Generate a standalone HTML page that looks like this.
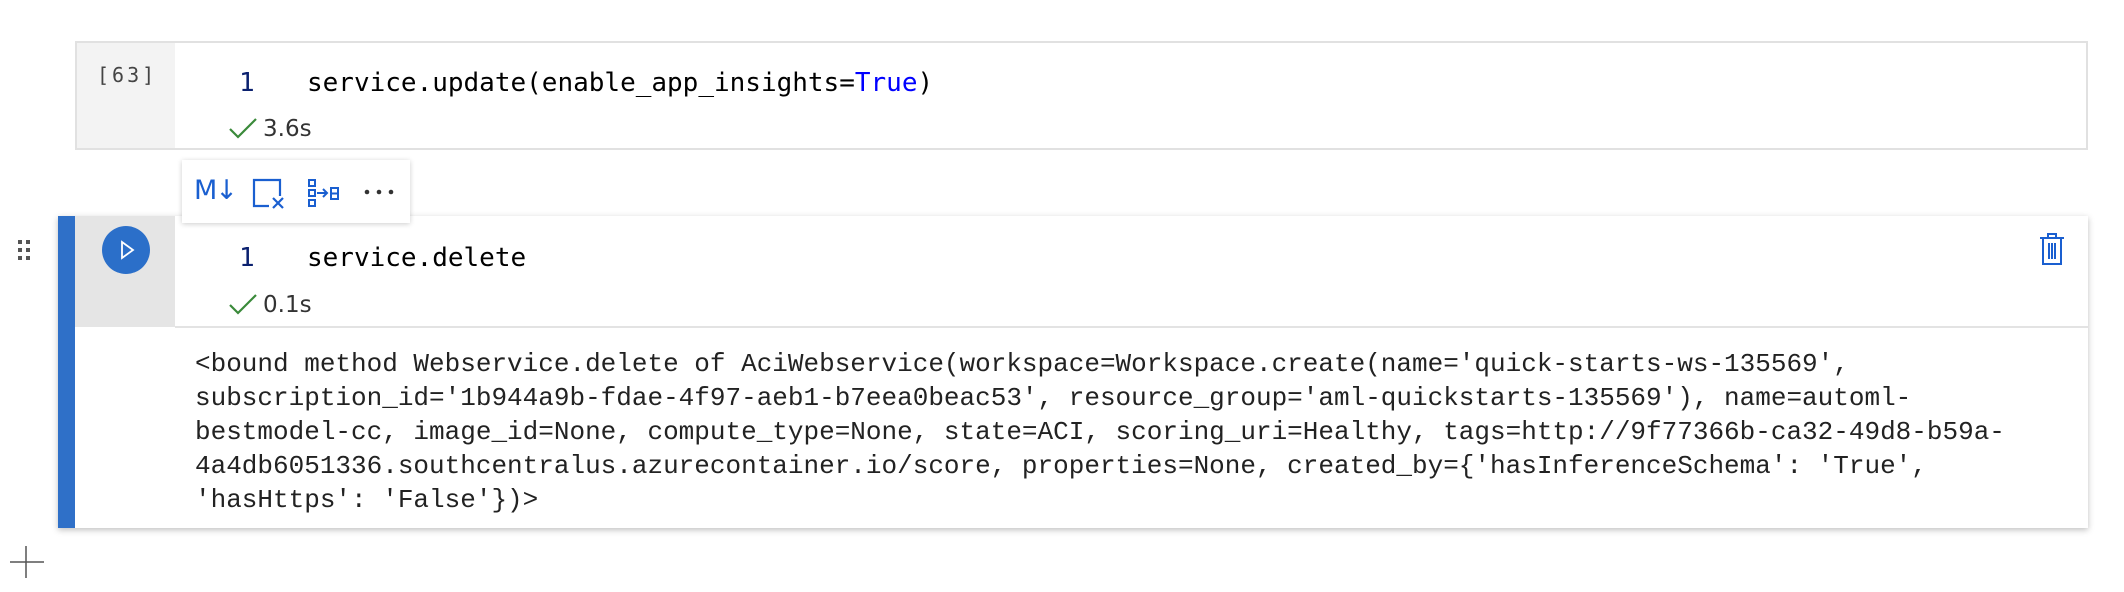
<!DOCTYPE html>
<html><head><meta charset="utf-8"><style>
html,body{margin:0;padding:0;background:#fff;width:2124px;height:592px;overflow:hidden;position:relative;font-family:"Liberation Sans",sans-serif}
.abs{position:absolute}
.mono{font-family:"DejaVu Sans Mono","Liberation Mono",monospace;font-size:26px;color:#000;white-space:pre}
.ln{color:#0b216f}
.chk{font-family:"DejaVu Sans",sans-serif;font-size:23px;color:#333}
.out{font-family:"Liberation Mono",monospace;font-size:26px;line-height:34px;color:#222;white-space:pre}
</style></head><body>
<!-- cell 1 -->
<div class="abs" style="left:75px;top:41px;width:2009px;height:105px;border:2px solid #e1e1e1;background:#fff"></div>
<div class="abs" style="left:77px;top:43px;width:98px;height:105px;background:#f3f3f3"></div>
<div class="abs" style="left:97px;top:63px;font-family:'DejaVu Sans Mono',monospace;font-size:20px;letter-spacing:3px;color:#444">[63]</div>
<div class="abs mono ln" style="left:239px;top:68px">1</div>
<div class="abs mono" style="left:307px;top:68px">service.update(enable_app_insights=<span style="color:#0000ff">True</span>)</div>
<svg class="abs" style="left:228px;top:116px" width="30" height="26"><path d="M2 13 L10 21 L28 3" fill="none" stroke="#3a8a3a" stroke-width="2.2"/></svg>
<div class="abs chk" style="left:263px;top:116px">3.6s</div>

<!-- cell 2 -->
<div class="abs" style="left:58px;top:216px;width:2030px;height:312px;background:#fff;box-shadow:0 2px 6px rgba(0,0,0,0.25)"></div>
<div class="abs" style="left:58px;top:216px;width:17px;height:312px;background:#2f70c8"></div>
<div class="abs" style="left:75px;top:216px;width:100px;height:111px;background:#e5e5e5"></div>
<div class="abs" style="left:175px;top:326px;width:1913px;height:2px;background:#e3e3e3"></div>
<div class="abs" style="left:102px;top:226px;width:48px;height:48px;border-radius:50%;background:#2b6fc9"></div>
<svg class="abs" style="left:102px;top:226px" width="48" height="48"><path d="M20 16 L31 24 L20 32 Z" fill="none" stroke="#fff" stroke-width="1.8"/></svg>
<div class="abs mono ln" style="left:239px;top:243px">1</div>
<div class="abs mono" style="left:307px;top:243px">service.delete</div>
<svg class="abs" style="left:228px;top:292px" width="30" height="26"><path d="M2 13 L10 21 L28 3" fill="none" stroke="#3a8a3a" stroke-width="2.2"/></svg>
<div class="abs chk" style="left:263px;top:292px">0.1s</div>
<svg class="abs" style="left:2038px;top:232px" width="30" height="36"><g fill="none" stroke="#1a5fd0" stroke-width="2"><path d="M2 6 H26 M10 6 V2 H18 V6 M5 6 V32 H23 V6 M11 11 V27 M14 11 V27 M17 11 V27"/></g></svg>
<div class="abs out" style="left:195px;top:347px">&lt;bound method Webservice.delete of AciWebservice(workspace=Workspace.create(name='quick-starts-ws-135569',
subscription_id='1b944a9b-fdae-4f97-aeb1-b7eea0beac53', resource_group='aml-quickstarts-135569'), name=automl-
bestmodel-cc, image_id=None, compute_type=None, state=ACI, scoring_uri=Healthy, tags=http://9f77366b-ca32-49d8-b59a-
4a4db6051336.southcentralus.azurecontainer.io/score, properties=None, created_by={'hasInferenceSchema': 'True',
'hasHttps': 'False'})&gt;</div>

<!-- drag dots -->
<svg class="abs" style="left:16px;top:238px" width="20" height="24"><g fill="#555"><rect x="2" y="2" width="4" height="4"/><rect x="10" y="2" width="4" height="4"/><rect x="2" y="10" width="4" height="4"/><rect x="10" y="10" width="4" height="4"/><rect x="2" y="18" width="4" height="4"/><rect x="10" y="18" width="4" height="4"/></g></svg>
<!-- plus -->
<svg class="abs" style="left:8px;top:544px" width="40" height="36"><path d="M18 2 V34 M2 18 H36" stroke="#555" stroke-width="1.5"/></svg>

<!-- toolbar -->
<div class="abs" style="left:182px;top:160px;width:228px;height:63px;background:#fff;box-shadow:0 1px 5px rgba(0,0,0,0.2)"></div>
<div class="abs" style="left:194px;top:175px;font-size:27px;color:#1a5fd0;font-family:'DejaVu Sans',sans-serif;letter-spacing:-2px">M↓</div>
<svg class="abs" style="left:252px;top:178px" width="36" height="32"><g fill="none" stroke="#1a5fd0" stroke-width="2.2"><path d="M17 28 H2 V2 H28 V18"/><path d="M21 20 L31 30 M31 20 L21 30"/></g></svg>
<svg class="abs" style="left:307px;top:178px" width="36" height="30"><g fill="none" stroke="#1a5fd0" stroke-width="2"><rect x="2" y="2" width="6" height="6"/><rect x="2" y="12" width="6" height="6"/><rect x="2" y="22" width="6" height="6"/><path d="M10 15 H20 M16 11 L20 15 L16 19"/><rect x="24" y="10" width="7" height="11"/><path d="M24 15.5 H31"/></g></svg>
<svg class="abs" style="left:362px;top:186px" width="36" height="12"><g fill="#333"><circle cx="5" cy="6" r="2.3"/><circle cx="17" cy="6" r="2.3"/><circle cx="29" cy="6" r="2.3"/></g></svg>
</body></html>
